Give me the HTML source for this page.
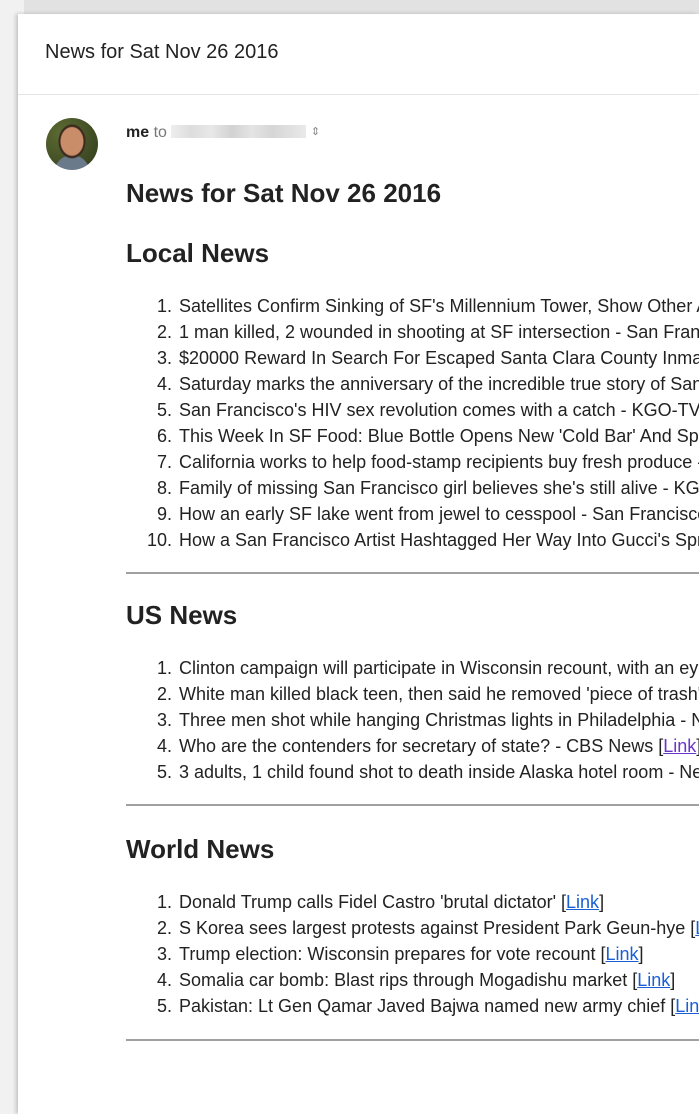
<!DOCTYPE html>
<html><head><meta charset="utf-8"><style>
*{margin:0;padding:0}
html,body{width:699px;height:1052px;overflow:hidden;background:#f1f1f1;font-family:"Liberation Sans",Arial,sans-serif;color:#222}
.top{position:absolute;left:24px;top:0;width:700px;height:14px;background:#e2e2e2}
.card{position:absolute;left:18px;top:14px;width:681px;height:1100px;background:#fff;box-shadow:-2px 0 4px rgba(0,0,0,.2);overflow:hidden}
.subj{position:absolute;left:45px;top:41px;font-size:20px;font-weight:300;color:#222;white-space:nowrap}
.div{position:absolute;left:18px;top:94px;width:681px;height:1px;background:#e5e5e5}
.av{position:absolute;left:46px;top:118px;width:52px;height:52px;border-radius:50%;background:radial-gradient(ellipse 12px 15px at 50% 45%,#c98d6a 0 11px,#3b2a1e 12px 13px,transparent 14px),radial-gradient(circle at 50% 105%,#6b7a8a 0 17px,transparent 18px),radial-gradient(circle at 30% 30%,#5d6b32,#2f3a1c)}
.me{position:absolute;left:126px;top:122px;font-size:16px;white-space:nowrap}
.blur{display:inline-block;width:135px;height:13px;vertical-align:-1px;background:linear-gradient(90deg,#eee,#ddd 15%,#e8e8e8 30%,#d2d2d2 45%,#e4e4e4 60%,#d6d6d6 75%,#e9e9e9)}
.wrap{position:absolute;left:0;top:0;width:699px;height:1052px;overflow:hidden}
h1,h2{position:absolute;left:126px;font-weight:bold;white-space:nowrap;color:#222}
h1{font-size:26px;top:178px}
h2{font-size:26px}
.hr{position:absolute;left:126px;width:600px;height:2px;background:#a0a0a0}
.li{position:absolute;left:120px;font-size:18px;white-space:nowrap;line-height:20px}
.li b{font-weight:normal;display:inline-block;width:57px;text-align:right;margin-right:7px;margin-left:-5px}
a{color:#1a5fd6;text-decoration:underline}
a.v{color:#6a35c9}
</style></head><body>
<div class="top"></div>
<div class="card"></div>
<div class="wrap">
<div class="subj">News for Sat Nov 26 2016</div>
<div class="div"></div>
<div class="av"></div>
<div class="me" style="top:124px"><b>me</b> <span style="color:#777">to</span> <span class="blur"></span> <span style="color:#888;font-size:11px;vertical-align:2px">&#8661;</span></div>
<h1>News for Sat Nov 26 2016</h1>
<h2 style="top:238px">Local News</h2>
<div class="li" style="top:296px"><b>1.</b>Satellites Confirm Sinking of SF's Millennium Tower, Show Other Areas Sinking</div>
<div class="li" style="top:322px"><b>2.</b>1 man killed, 2 wounded in shooting at SF intersection - San Francisco Chronicle</div>
<div class="li" style="top:348px"><b>3.</b>$20000 Reward In Search For Escaped Santa Clara County Inmates</div>
<div class="li" style="top:374px"><b>4.</b>Saturday marks the anniversary of the incredible true story of San Francisco</div>
<div class="li" style="top:400px"><b>5.</b>San Francisco's HIV sex revolution comes with a catch - KGO-TV [Link]</div>
<div class="li" style="top:426px"><b>6.</b>This Week In SF Food: Blue Bottle Opens New 'Cold Bar' And Spruce</div>
<div class="li" style="top:452px"><b>7.</b>California works to help food-stamp recipients buy fresh produce - SFGate</div>
<div class="li" style="top:478px"><b>8.</b>Family of missing San Francisco girl believes she's still alive - KGO-TV</div>
<div class="li" style="top:504px"><b>9.</b>How an early SF lake went from jewel to cesspool - San Francisco Chronicle</div>
<div class="li" style="top:530px"><b>10.</b>How a San Francisco Artist Hashtagged Her Way Into Gucci's Spring Line</div>
<div class="hr" style="top:572px"></div>
<h2 style="top:600px">US News</h2>
<div class="li" style="top:658px"><b>1.</b>Clinton campaign will participate in Wisconsin recount, with an eye</div>
<div class="li" style="top:684px"><b>2.</b>White man killed black teen, then said he removed 'piece of trash' - NBC</div>
<div class="li" style="top:710px"><b>3.</b>Three men shot while hanging Christmas lights in Philadelphia - NBC News</div>
<div class="li" style="top:736px"><b>4.</b>Who are the contenders for secretary of state? - CBS News [<a class="v">Link</a>]</div>
<div class="li" style="top:762px"><b>5.</b>3 adults, 1 child found shot to death inside Alaska hotel room - New York</div>
<div class="hr" style="top:804px"></div>
<h2 style="top:834px">World News</h2>
<div class="li" style="top:892px"><b>1.</b>Donald Trump calls Fidel Castro 'brutal dictator' [<a>Link</a>]</div>
<div class="li" style="top:918px"><b>2.</b>S Korea sees largest protests against President Park Geun-hye [<a>Link</a>]</div>
<div class="li" style="top:944px"><b>3.</b>Trump election: Wisconsin prepares for vote recount [<a>Link</a>]</div>
<div class="li" style="top:970px"><b>4.</b>Somalia car bomb: Blast rips through Mogadishu market [<a>Link</a>]</div>
<div class="li" style="top:996px"><b>5.</b>Pakistan: Lt Gen Qamar Javed Bajwa named new army chief [<a>Link</a>]</div>
<div class="hr" style="top:1039px"></div>
</div>
</body></html>
